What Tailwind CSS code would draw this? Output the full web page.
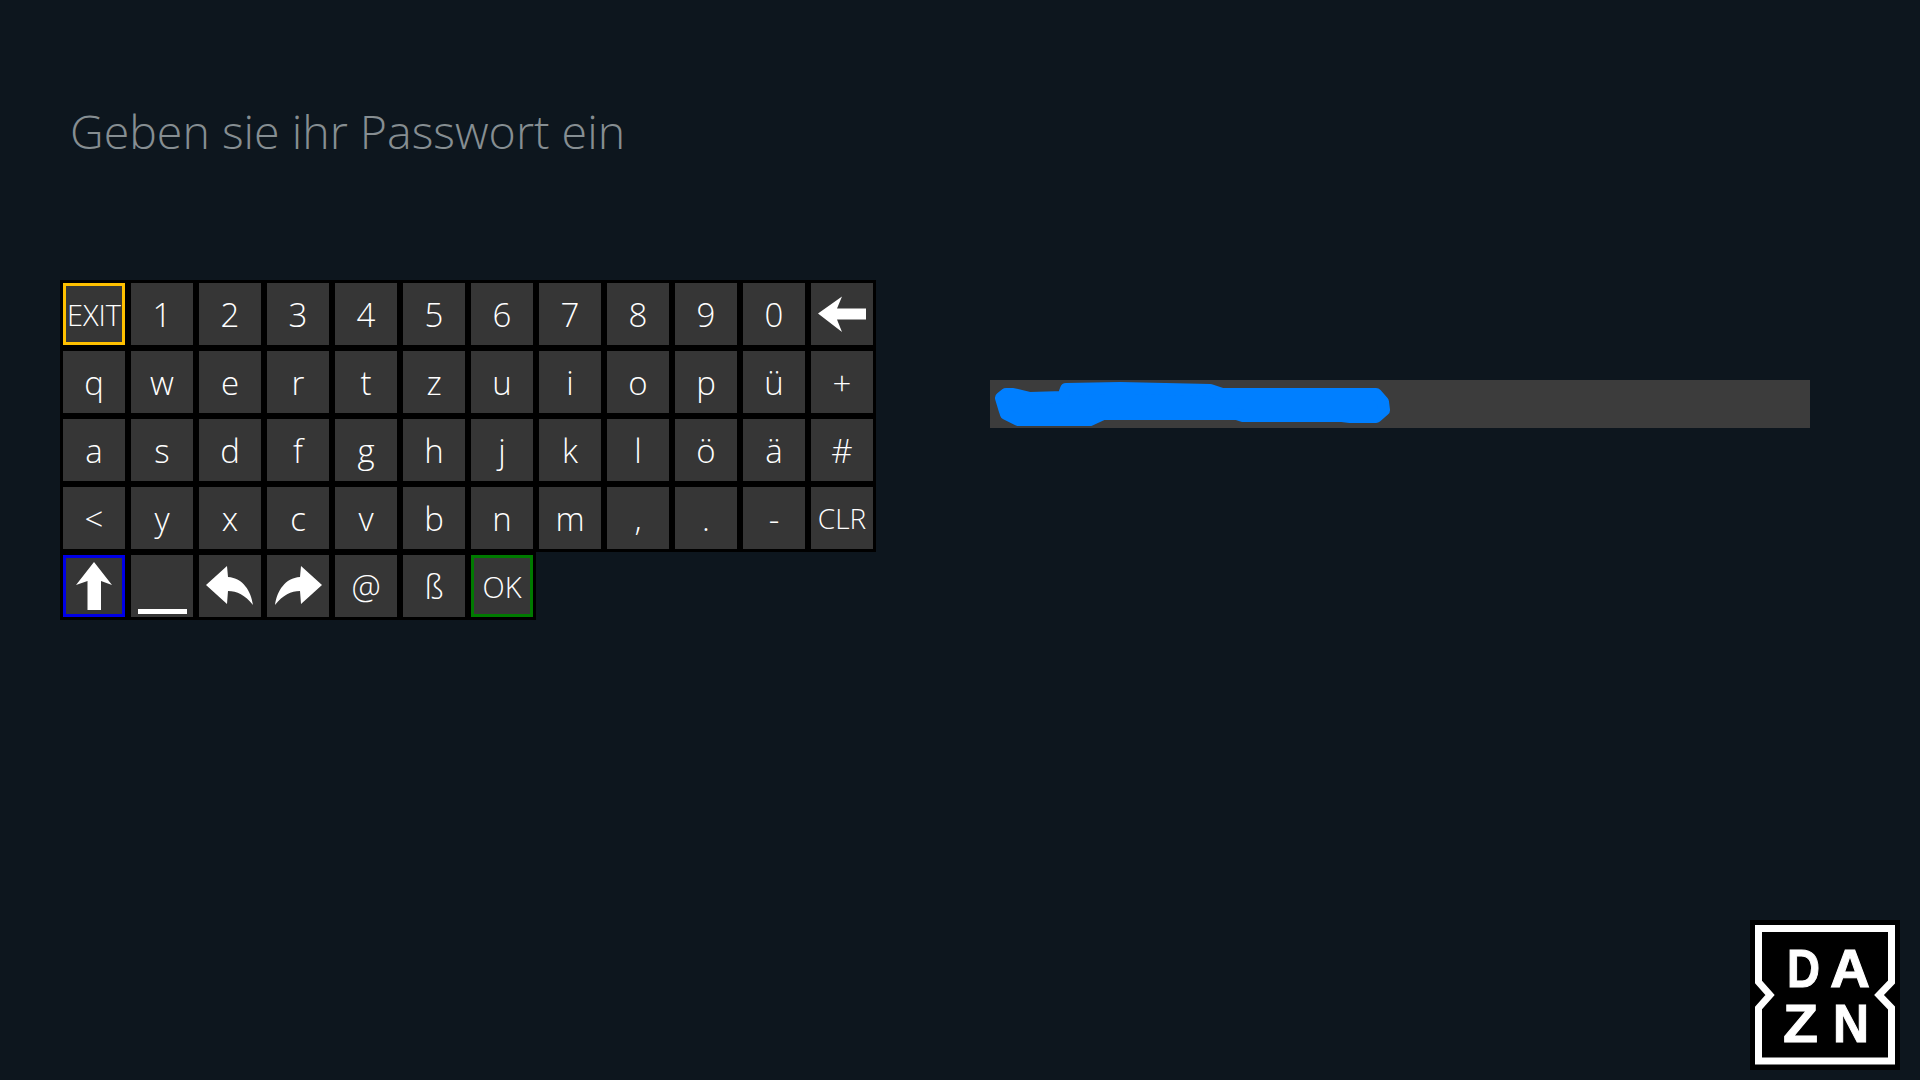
<!DOCTYPE html>
<html lang="de">
<head>
  <meta charset="UTF-8">
  <title>Passwort</title>
  <script src="https://cdn.jsdelivr.net/npm/@tailwindcss/browser@4"></script>
</head>
<body class="bg-[#0d161e] font-['Open_Sans',sans-serif]">
  <div class="w-[1920px] h-[1080px] overflow-hidden flex flex-col">
    <h1 class="ml-[70px] mt-[101px] h-[179px] text-[46.5px] leading-[60px] font-light text-[#868e92]">Geben sie ihr Passwort ein</h1>

    <div class="flex items-start">
      <!-- Keyboard -->
      <div class="ml-[60px] text-[33px] leading-none font-light text-white">
        <div class="grid grid-cols-[repeat(12,62px)] auto-rows-[62px] gap-[6px] p-[3px] bg-black w-fit">
          <div class="flex items-center justify-center bg-[#363636] border-[3px] border-[#ffc000] text-[29px]">EXIT</div>
          <div class="flex items-center justify-center bg-[#363636]">1</div>
          <div class="flex items-center justify-center bg-[#363636]">2</div>
          <div class="flex items-center justify-center bg-[#363636]">3</div>
          <div class="flex items-center justify-center bg-[#363636]">4</div>
          <div class="flex items-center justify-center bg-[#363636]">5</div>
          <div class="flex items-center justify-center bg-[#363636]">6</div>
          <div class="flex items-center justify-center bg-[#363636]">7</div>
          <div class="flex items-center justify-center bg-[#363636]">8</div>
          <div class="flex items-center justify-center bg-[#363636]">9</div>
          <div class="flex items-center justify-center bg-[#363636]">0</div>
          <div class="bg-[#363636]">
            <svg class="w-[62px] h-[62px]" viewBox="0 0 62 62"><path fill="#fff" d="M7 30.5 31 13.5 26 25.5H55V36.5H26L31 49Z"/></svg>
          </div>

          <div class="flex items-center justify-center bg-[#363636]">q</div>
          <div class="flex items-center justify-center bg-[#363636]">w</div>
          <div class="flex items-center justify-center bg-[#363636]">e</div>
          <div class="flex items-center justify-center bg-[#363636]">r</div>
          <div class="flex items-center justify-center bg-[#363636]">t</div>
          <div class="flex items-center justify-center bg-[#363636]">z</div>
          <div class="flex items-center justify-center bg-[#363636]">u</div>
          <div class="flex items-center justify-center bg-[#363636]">i</div>
          <div class="flex items-center justify-center bg-[#363636]">o</div>
          <div class="flex items-center justify-center bg-[#363636]">p</div>
          <div class="flex items-center justify-center bg-[#363636]">ü</div>
          <div class="flex items-center justify-center bg-[#363636]">+</div>

          <div class="flex items-center justify-center bg-[#363636]">a</div>
          <div class="flex items-center justify-center bg-[#363636]">s</div>
          <div class="flex items-center justify-center bg-[#363636]">d</div>
          <div class="flex items-center justify-center bg-[#363636]">f</div>
          <div class="flex items-center justify-center bg-[#363636]">g</div>
          <div class="flex items-center justify-center bg-[#363636]">h</div>
          <div class="flex items-center justify-center bg-[#363636]">j</div>
          <div class="flex items-center justify-center bg-[#363636]">k</div>
          <div class="flex items-center justify-center bg-[#363636]">l</div>
          <div class="flex items-center justify-center bg-[#363636]">ö</div>
          <div class="flex items-center justify-center bg-[#363636]">ä</div>
          <div class="flex items-center justify-center bg-[#363636]">#</div>

          <div class="flex items-center justify-center bg-[#363636]">&lt;</div>
          <div class="flex items-center justify-center bg-[#363636]">y</div>
          <div class="flex items-center justify-center bg-[#363636]">x</div>
          <div class="flex items-center justify-center bg-[#363636]">c</div>
          <div class="flex items-center justify-center bg-[#363636]">v</div>
          <div class="flex items-center justify-center bg-[#363636]">b</div>
          <div class="flex items-center justify-center bg-[#363636]">n</div>
          <div class="flex items-center justify-center bg-[#363636]">m</div>
          <div class="flex items-center justify-center bg-[#363636]">,</div>
          <div class="flex items-center justify-center bg-[#363636]">.</div>
          <div class="flex items-center justify-center bg-[#363636]">-</div>
          <div class="flex items-center justify-center bg-[#363636] text-[28px]">CLR</div>
        </div>

        <div class="grid grid-cols-[repeat(7,62px)] auto-rows-[62px] gap-[6px] p-[3px] bg-black w-fit">
          <div class="bg-[#363636] border-[3px] border-[#0000e6]">
            <svg class="w-[56px] h-[56px]" viewBox="3 3 56 56"><path fill="#fff" d="M31 7 49 30 38 26V55H24.5V26L13 30Z"/></svg>
          </div>
          <div class="flex items-end justify-center pb-[3px] bg-[#363636]">
            <div class="w-[49px] h-[5px] bg-white"></div>
          </div>
          <div class="bg-[#363636]">
            <svg class="w-[62px] h-[62px]" viewBox="0 0 62 62"><path fill="#fff" d="M7 30 28 11 29 22C44 23 52 36 54 50 46 40 38 36 29 36L28 49Z"/></svg>
          </div>
          <div class="bg-[#363636]">
            <svg class="w-[62px] h-[62px] -scale-x-100" viewBox="0 0 62 62"><path fill="#fff" d="M7 30 28 11 29 22C44 23 52 36 54 50 46 40 38 36 29 36L28 49Z"/></svg>
          </div>
          <div class="flex items-center justify-center bg-[#363636]">@</div>
          <div class="flex items-center justify-center bg-[#363636]">ß</div>
          <div class="flex items-center justify-center bg-[#363636] border-[3px] border-[#007a00] text-[29px]">OK</div>
        </div>
      </div>

      <!-- Password field, the value is painted over -->
      <div class="relative ml-[114px] mt-[100px] w-[820px] h-[48px] bg-[#3c3c3c]">
        <svg class="absolute inset-0 w-[820px] h-[48px]" viewBox="0 0 820 48">
          <path fill="#007fff" stroke="#007fff" stroke-width="12" stroke-linejoin="round" d="M11 18 16 14 23 14 40 18 73 17 76 9 130 8 220 10 232 14H386L393 22 394 30 386 37 360 37 352 36H253L247 34H113L100 40H28L16 34 14 28Z"/>
        </svg>
      </div>
    </div>

    <!-- DAZN logo -->
    <div class="mt-auto mb-[10px] ml-auto mr-[20px] w-[150px] h-[150px] bg-black">
      <svg class="w-[150px] h-[150px]" viewBox="0 0 150 150">
        <path fill="none" stroke="#fff" stroke-width="7" d="M8.5 8.5H141.5V62L129 75 141.5 88V141H8.5V88L20 75 8.5 62Z"/>
        <g fill="#fff" stroke="#fff" stroke-width="1" font-family="Liberation Sans" font-weight="700" font-size="54">
          <text x="37" y="67" textLength="33" lengthAdjust="spacingAndGlyphs">D</text>
          <text x="80" y="67" textLength="40" lengthAdjust="spacingAndGlyphs">A</text>
          <text x="33" y="122" textLength="35" lengthAdjust="spacingAndGlyphs">Z</text>
          <text x="83" y="122" textLength="36" lengthAdjust="spacingAndGlyphs">N</text>
        </g>
      </svg>
    </div>
  </div>
</body>
</html>
